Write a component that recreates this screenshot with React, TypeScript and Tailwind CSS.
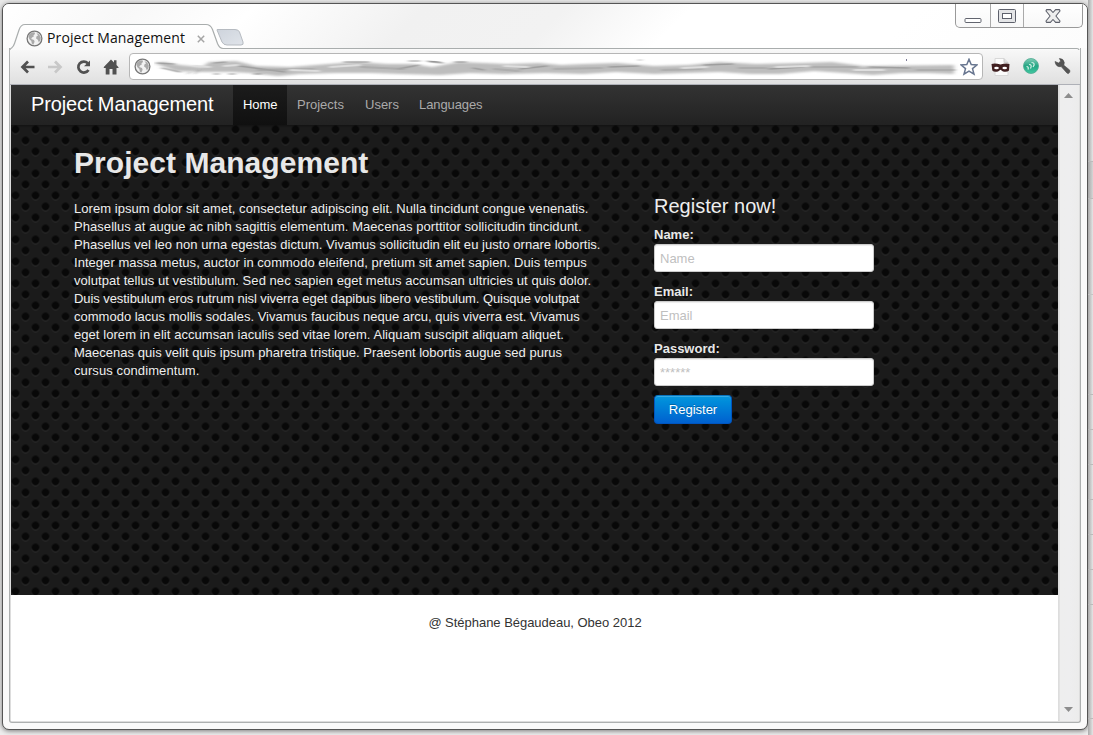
import React from "react";

const lines: [string, string][] = [
  ["Lorem ipsum dolor sit amet, consectetur adipiscing elit. Nulla tincidunt congue venenatis.", "tracking-[0.04px]"],
  ["Phasellus at augue ac nibh sagittis elementum. Maecenas porttitor sollicitudin tincidunt.", "tracking-[0.06px]"],
  ["Phasellus vel leo non urna egestas dictum. Vivamus sollicitudin elit eu justo ornare lobortis.", "tracking-[0.03px]"],
  ["Integer massa metus, auctor in commodo eleifend, pretium sit amet sapien. Duis tempus", "tracking-[0.04px]"],
  ["volutpat tellus ut vestibulum. Sed nec sapien eget metus accumsan ultricies ut quis dolor.", "tracking-[0.055px]"],
  ["Duis vestibulum eros rutrum nisl viverra eget dapibus libero vestibulum. Quisque volutpat", "tracking-[-0.07px]"],
  ["commodo lacus mollis sodales. Vivamus faucibus neque arcu, quis viverra est. Vivamus", "tracking-[0.005px]"],
  ["eget lorem in elit accumsan iaculis sed vitae lorem. Aliquam suscipit aliquam aliquet.", "tracking-[0.06px]"],
  ["Maecenas quis velit quis ipsum pharetra tristique. Praesent lobortis augue sed purus", "tracking-[0.02px]"],
  ["cursus condimentum.", "tracking-[0.1px]"],
];

function Globe() {
  return (
    <svg width="17" height="17" viewBox="0 0 17 17" className="shrink-0">
      <circle cx="8.5" cy="8.5" r="7.4" fill="#f2f2f2" stroke="#777" strokeWidth="1.3" />
      <path d="M3 4.5 5.5 2.5 8.5 2.2 9 4 7.5 5.3 7.8 6.5 6 7.5 5.2 9 8 10 8.6 11.8 7.3 14.8 5.8 13.5 5.3 11 3.4 9.3 2.3 6.5Z" fill="#aaa" />
      <path d="M10.5 3 13.3 4.6 14.8 7.5 14.5 10.3 12.8 12.2 11.8 9.8 10.1 8.6 10.4 6.4 12 5.5Z" fill="#aaa" />
    </svg>
  );
}

function WindowControls() {
  return (
    <div className="flex h-[24px] w-[128px] shrink-0 rounded-b-[5px] border border-t-0 border-[#999] bg-gradient-to-b from-white to-[#f8f8f8]">
      <div className="flex w-[35px] items-center justify-center border-r border-[#aaa]">
        <svg width="18" height="18" viewBox="0 0 18 18"><rect x="1" y="11.5" width="16" height="4" rx="1" fill="#fff" stroke="#62656f" /></svg>
      </div>
      <div className="flex w-[33px] items-center justify-center border-r border-[#aaa]">
        <svg width="18" height="14" viewBox="0 0 18 14"><rect x=".5" y=".5" width="17" height="13" rx="1" fill="#e4e5e7" stroke="#5d606b" /><rect x="4.5" y="4.5" width="9" height="5" fill="#fff" stroke="#5d606b" /></svg>
      </div>
      <div className="flex grow items-center justify-center">
        <svg width="16" height="14" viewBox="0 0 16 14"><path d="M1.500.6H5.4L8 3.500 10.600.6H14.500L15 2 10.900 7 15 12 14.500 13.400H10.600L8 10.500 5.400 13.400H1.500L1 12 5.100 7 1 2Z" fill="#eee" stroke="#5d606b" strokeWidth="1.100" strokeLinejoin="round" /></svg>
      </div>
    </div>
  );
}

function TabStrip() {
  return (
    <div className="relative z-10 flex h-[44px] bg-[linear-gradient(135deg,#ffffff_0px,#f8f8f8_90px,#ffffff_180px,#f1f1f1_300px,#f2f2f2_400px,#ffffff_490px,#ffffff_650px,#fafafa_900px)]">
      <svg width="1084" height="46" viewBox="0 0 1084 46" className="absolute left-0 top-0">
        <defs>
          <linearGradient id="tabFill" x1="0" y1="0" x2="0" y2="1"><stop offset="0" stopColor="#fff" /><stop offset="1" stopColor="#f9f9f9" /></linearGradient>
          <linearGradient id="newTab" x1="0" y1="0" x2="1" y2="1"><stop offset="0" stopColor="#ced4dc" /><stop offset="1" stopColor="#e0e4ea" /></linearGradient>
        </defs>
        <path d="M6.5 49V46.5Q7 45 8.8 43.8 10.5 42.5 11.5 39.5L16 26Q17.8 20.5 22 20.5H203Q207.500 20.5 209.500 25.500L214.500 39.5Q216.500 44.5 220 44.5H1074Q1076.500 44.5 1076.500 49Z" fill="url(#tabFill)" stroke="#a9adad" strokeWidth="1.2" />
        <path d="M214 26Q213.500 25.500 215 25.500H232Q235.500 25.500 236.500 28L240 38Q241 41 238 41H224Q220.500 41 219 38Z" fill="url(#newTab)" stroke="#b6bbc1" />
      </svg>
      <div className="relative flex h-[20px] w-[212px] shrink-0 items-center self-end pl-[23px]">
        <Globe />
        <span className="ml-[4px] w-[144px] whitespace-nowrap font-['Open_Sans',sans-serif] text-[14px] leading-[20px] tracking-[0.12px] text-[#111]">Project Management</span>
        <svg width="8" height="8" viewBox="0 0 8 8" className="ml-[6px] mt-[2px]"><path d="M.8.8 7.200 7.200M7.200.8.8 7.200" stroke="#a5a5a5" strokeWidth="1.5" /></svg>
      </div>
      <div className="grow" />
      <div className="relative mr-[4px]"><WindowControls /></div>
    </div>
  );
}

function Smudge() {
  return (
    <svg width="806" height="24" viewBox="0 0 806 24" className="shrink-0">
      <defs>
        <filter id="soft" x="-5%" y="-50%" width="110%" height="200%"><feGaussianBlur stdDeviation="2.2 1.1" /></filter>
        <filter id="fine" x="-5%" y="-50%" width="110%" height="200%"><feGaussianBlur stdDeviation="2 .6" /></filter>
      </defs>
      <path filter="url(#soft)" fill="#bdbdbd" d="M0 8 10 7 26 10 48 12 55 7 82 6 102 11 136 12 174 9 203 7 233 9 258 9 278 12 305 7 330 8 352 9 385 8 407 10 430 9 463 8 500 11 535 10 565 7 602 9 646 8 678 7 709 11 800 10V19L774 18 748 18 719 20 690 18 660 16 626 19 596 19 566 17 530 18 500 19 462 17 429 19 392 18 350 19 316 18 286 20 247 19 217 18 182 18 146 19 124 21 96 18 77 17 48 17 22 16Z" />
      <g filter="url(#fine)" fill="none" strokeLinecap="round">
        <path d="M3 8 20 9M8 13 26 17M60 8 72 7M85 11 131 17M190 7 215 7M244 14 265 10M276 7 289 8M301 7 312 7M319 13 330 15M366 14 393 11M455 12 485 11M550 10 579 9M615 14 650 12M715 12 755 13" stroke="#8e8e8e" strokeWidth="1.500" opacity=".65" />
        <path d="M104 15 160 14M207 12 250 14M340 14 365 16M400 14 448 13M508 15 548 14M585 13 612 13M657 12 703 12M763 15 800 15" stroke="#a5a5a5" strokeWidth="2.200" opacity=".7" />
        <path d="M34 19 36 17M41 19 45 15M60 19H65M75 19H81M100 19H107M255 6H266M273 6 286 7M485 5H487" stroke="#555" strokeWidth="1" opacity=".6" />
        <path d="M40 11 56 12M70 11 84 10M136 15 165 16M176 12 206 10M350 11 374 12M528 13 553 12M622 12 655 11M700 15 730 15" stroke="#dedede" strokeWidth="2" />
      </g>
      <path d="M752.500 4V6" stroke="#7b7894" />
    </svg>
  );
}

function Toolbar() {
  return (
    <div className="flex h-[37px] items-center border-b border-[#aeb0b7] bg-gradient-to-b from-[#f9f9f9] to-[#e0e0e0] pl-[9px] pt-px">
      <svg width="102" height="22" viewBox="0 0 102 22" className="shrink-0" fill="none">
        <path d="M15.500 11H4M9 5.500 3.500 11 9 16.500" stroke="#515151" strokeWidth="2.700" />
        <path d="M29 11H41M36 5.500 41.500 11 36 16.500" stroke="#c8c8c8" strokeWidth="2.700" />
        <path d="M68.800 7.200A5.500 5.500 0 1 0 69.500 14" stroke="#515151" strokeWidth="2.700" />
        <path d="M71 4.500V10.300H65Z" fill="#515151" />
        <path d="M84.800 11 92 3.500 95 6.600V4.300H97.500V9L99.500 11.200V12H97.500V18.500H93.500V13H90.500V18.500H86.700V12H84.800Z" fill="#515151" />
      </svg>
      <div className="ml-[8px] flex h-[27px] w-[854px] shrink-0 items-center rounded-[4px] border border-[#b6b6b6] bg-white pl-[4px]">
        <Globe />
        <div className="ml-[3px]"><Smudge /></div>
        <svg width="18" height="18" viewBox="0 0 18 18" className="ml-[0px] shrink-0"><path d="M9 1.300 11.200 6.600 16.900 7 12.500 10.600 14 16.200 9 13.100 4 16.200 5.500 10.600 1.100 7 6.800 6.600Z" fill="#fff" stroke="#687690" strokeWidth="1.500" /></svg>
      </div>
      <svg width="88" height="24" viewBox="0 0 88 24" className="ml-[7px] shrink-0">
        <path d="M5 3.500H14L18 7.500V20.500H5Z" fill="#fbfbfb" stroke="#d8d8d8" />
        <path d="M14 3.500V7.500H18" fill="#ddd" stroke="#ccc" />
        <path d="M1.500 9Q5 8 10.500 9.500 16 8 19.500 9L19 15.500Q17 17.500 13 16.500L10.500 14.800 8 16.500Q4 17.500 2.300 15.500Z" fill="#401f20" />
        <ellipse cx="6.500" cy="13" rx="2.300" ry="1.200" fill="#fff" /><ellipse cx="14.700" cy="13" rx="2.300" ry="1.200" fill="#fff" />
        <defs><linearGradient id="ball" x1="0" y1="0" x2="0" y2="1"><stop offset="0" stopColor="#82cdb7" /><stop offset=".5" stopColor="#24a583" /><stop offset="1" stopColor="#41c8a1" /></linearGradient></defs>
        <circle cx="41" cy="11" r="7.500" fill="url(#ball)" stroke="#4caa91" strokeWidth=".8" />
        <path d="M36.500 11.500Q39 11.500 38 14.500M39 9.500Q42.500 9.500 40.500 13.500M41.500 7.500Q46 8 43 12" fill="none" stroke="#d8f2e9" strokeWidth="1.200" />
        <path d="M65 6.500 68.500 8 70.700 6 69.400 3.500Q73.500 3.500 74.300 7.500L73.800 10.200 79.800 15.200Q80.500 17.500 78.500 18.600 77 18.600 76 17L71.200 11.600Q66 12.500 65 6.500Z" fill="#555" stroke="#484848" strokeWidth=".6" />
      </svg>
    </div>
  );
}

function Field({ label, hint }: { label: string; hint: string }) {
  return (
    <label className="mb-[9px] block h-[48px]">
      <span className="block h-[19px] text-[13px] font-bold leading-[20px] text-[#e8e8e8]">{label}</span>
      <input placeholder={hint} className="block h-[28px] w-[220px] rounded-[3px] border border-[#ccc] bg-white px-[5px] pt-px text-[13px] leading-[18px] shadow-[inset_0_1px_1px_rgba(0,0,0,0.075)] placeholder:text-[#bfbfbf] placeholder:opacity-100" />
    </label>
  );
}

function SitePage() {
  return (
    <div className="h-[636px] w-[1047px] shrink-0 bg-white font-['Liberation_Sans',Arial,sans-serif] text-[13px] leading-[18px]">
      <nav className="flex h-[40px] bg-gradient-to-b from-[#333] to-[#222]">
        <div className="w-[222px] pl-[20px] text-[20px] leading-[39px] tracking-[-0.12px] text-white">Project Management</div>
        <div className="w-[54px] bg-gradient-to-b from-[#1c1c1c] to-[#101010] pl-[10px] leading-[39px] tracking-[-0.1px] text-white">Home</div>
        <div className="w-[68px] pl-[10px] leading-[39px] text-[#aaa]">Projects</div>
        <div className="w-[54px] pl-[10px] leading-[39px] text-[#aaa]">Users</div>
        <div className="pl-[10px] leading-[39px] tracking-[-0.1px] text-[#aaa]">Languages</div>
      </nav>
      <main className="h-[470px] bg-[#1b1b1b] bg-[image:linear-gradient(to_bottom,rgba(0,0,0,0.3),transparent),radial-gradient(circle_at_10px_10px,#080808_3.500px,transparent_4.300px),radial-gradient(circle_at_10px_11px,#303030_3.400px,transparent_4.200px),radial-gradient(circle_at_10px_10px,#080808_3.500px,transparent_4.300px),radial-gradient(circle_at_10px_11px,#303030_3.400px,transparent_4.200px)] bg-[size:100%_3px,20px_22px,20px_22px,20px_22px,20px_22px] bg-[position:0_0,-5.5px_-5.5px,-5.5px_-5.5px,4.5px_5.5px,4.5px_5.5px] [background-repeat:no-repeat,repeat,repeat,repeat,repeat] pl-[63px] pt-[20px] text-[#eee]">
        <h1 className="h-[55px] text-[30px] font-bold leading-[36px] tracking-[0.05px] text-[#e8e8e8]">Project Management</h1>
        <div className="flex">
          <div className="w-[580px] shrink-0">
            {lines.map(([line, spacing]) => <div key={line} className={`whitespace-nowrap ${spacing}`}>{line}</div>)}
          </div>
          <form className="-mt-[7px] w-[220px]" onSubmit={(event) => event.preventDefault()}>
            <h2 className="mb-[5px] text-[20px] leading-[27px]">Register now!</h2>
            <Field label="Name:" hint="Name" />
            <Field label="Email:" hint="Email" />
            <Field label="Password:" hint="******" />
            <button className="-mt-px block h-[29px] w-[78px] rounded-[4px] border border-[#0055bf] border-t-[#0873bd] bg-gradient-to-b from-[#0797dd] to-[#0060cf] text-[13px] leading-[18px] text-white shadow-[inset_0_1px_0_rgba(255,255,255,0.2)] [text-shadow:0_-1px_0_rgba(0,0,0,0.25)]">Register</button>
          </form>
        </div>
      </main>
      <footer className="pl-px pt-[19px] text-center tracking-[-0.03px] text-[#333]">@ Stéphane Bégaudeau, Obeo 2012</footer>
    </div>
  );
}

function Scrollbar() {
  return (
    <div className="ml-px flex w-[20px] flex-col items-center justify-between border-l border-[#e2e2e2] bg-gradient-to-r from-[#eee] via-[#eeeeef] to-[#ececec] pb-[9px] pr-[2px] pt-[8px]">
      <svg width="9" height="5" viewBox="0 0 9 5"><path d="M0 5 4.500 0 9 5Z" fill="#8d8d8d" /></svg>
      <svg width="9" height="5" viewBox="0 0 9 5"><path d="M0 0 4.500 5 9 0Z" fill="#8d8d8d" /></svg>
    </div>
  );
}

export default function App() {
  return (
    <div className="flex h-[735px] w-[1093px] overflow-hidden bg-gradient-to-b from-[#e9e9e9] to-[#eee]">
      <div className="ml-[2px] mt-[3px] h-[727px] w-[1086px] shrink-0 overflow-hidden rounded-[7px] border border-[#555] bg-[#fafafa] shadow-[0_1px_5px_rgba(0,0,0,0.5)]">
        <TabStrip />
        <div className="relative ml-[6px] h-[675px] w-[1072px] overflow-hidden rounded-b-[3px] border-x border-b border-[#adb0b0] bg-[#ddd]">
          <Toolbar />
          <div className="flex h-[636px] pl-px">
            <SitePage />
            <Scrollbar />
          </div>
        </div>
      </div>
      <div className="flex w-[5px] flex-col bg-gradient-to-r from-[#aaa] to-[#e6e6e6]">
        <div className="h-[162px] border-b border-[#bbb]" />
        <div className="h-[37px] border-b border-[#bbb] bg-[#999]/20" />
        <div className="h-[96px] border-b border-[#c5c5c5]" />
        <div className="h-[100px] border-b border-[#bbb]" />
        {[0, 1, 2, 3, 4, 5].map((row) => <div key={row} className="h-[35px] border-b border-[#bbb]" />)}
        <div className="h-[114px] border-b border-[#bbb]" />
      </div>
    </div>
  );
}
